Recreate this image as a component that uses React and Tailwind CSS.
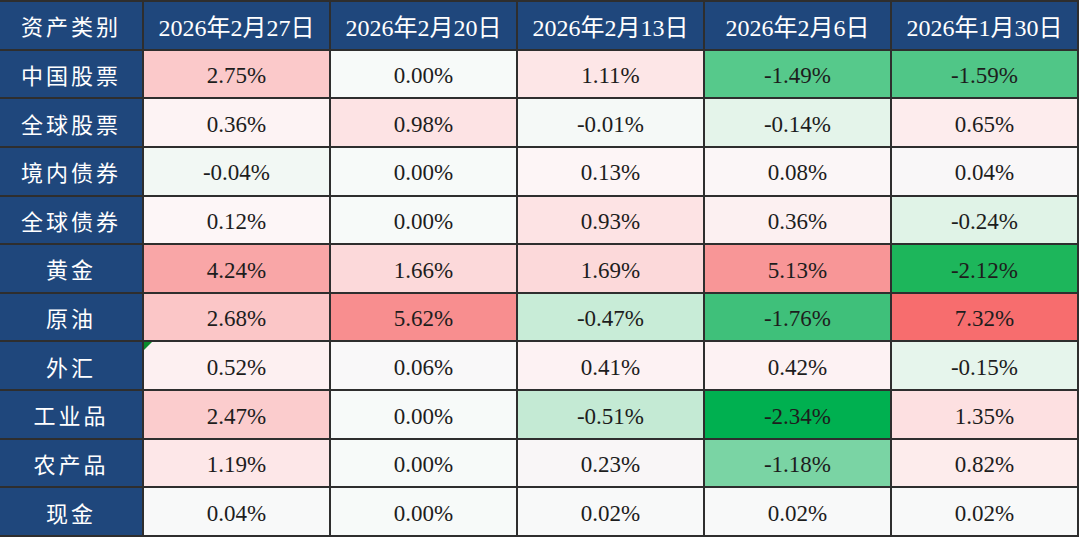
const headers = ['资产类别', '2026年2月27日', '2026年2月20日', '2026年2月13日', '2026年2月6日', '2026年1月30日'];

const rows = [
  ['中国股票', [['2.75%', '#fbc9ca'], ['0.00%', '#f7faf9'], ['1.11%', '#fde6e7'], ['-1.49%', '#56c98b'], ['-1.59%', '#50c687']]],
  ['全球股票', [['0.36%', '#fdf3f4'], ['0.98%', '#fde3e4'], ['-0.01%', '#f5f9f7'], ['-0.14%', '#e4f4ea'], ['0.65%', '#fdeced']]],
  ['境内债券', [['-0.04%', '#f2f8f4'], ['0.00%', '#f7faf9'], ['0.13%', '#fdf5f6'], ['0.08%', '#fbf6f7'], ['0.04%', '#f9f7f8']]],
  ['全球债券', [['0.12%', '#fdf6f7'], ['0.00%', '#f7faf9'], ['0.93%', '#fde3e4'], ['0.36%', '#fcf0f1'], ['-0.24%', '#e0f3e7']]],
  ['黄金', [['4.24%', '#f9a6a7'], ['1.66%', '#fcd9da'], ['1.69%', '#fcd9da'], ['5.13%', '#f89697'], ['-2.12%', '#1db65b']]],
  ['原油', [['2.68%', '#fbc6c7'], ['5.62%', '#f88e8f'], ['-0.47%', '#c8ecd7'], ['-1.76%', '#3fc07a'], ['7.32%', '#f76d6e']]],
  ['外汇', [['0.52%', '#fdf0f1'], ['0.06%', '#f9f8f9'], ['0.41%', '#fdf2f3'], ['0.42%', '#fdf2f3'], ['-0.15%', '#e6f5ec']]],
  ['工业品', [['2.47%', '#fbcccd'], ['0.00%', '#f7faf9'], ['-0.51%', '#c4ead4'], ['-2.34%', '#00b050'], ['1.35%', '#fde0e1']]],
  ['农产品', [['1.19%', '#fde7e8'], ['0.00%', '#f7faf9'], ['0.23%', '#f9f6f7'], ['-1.18%', '#7ad4a4'], ['0.82%', '#fdecec']]],
  ['现金', [['0.04%', '#f8f9f9'], ['0.00%', '#f7faf9'], ['0.02%', '#f8f9f9'], ['0.02%', '#f8f9f9'], ['0.02%', '#f8f9f9']]],
];

export default function App() {
  return (
    <div className="w-[1080px] h-[537px] bg-white overflow-hidden">
      <div className="grid grid-cols-[142px_repeat(5,185px)] grid-rows-[repeat(11,1fr)] gap-[2px] pt-[2px] pr-[2px] pb-[2px] bg-[#2e2e2e] w-[1079px] h-[537px] font-['Liberation_Serif','Noto_Sans_CJK_SC',serif]">
        {headers.map((h, i) => (
          <div
            key={h}
            className={`flex items-center justify-center pt-[5px] bg-[#1f477c] text-white ${i === 0 ? 'text-[22px] tracking-[3px]' : 'text-[24px]'}`}
          >
            {h}
          </div>
        ))}
        {rows.map(([label, cells], r) => (
          <>
            <div key={label} className="flex items-center justify-center pt-[5px] bg-[#1f477c] text-white text-[22px] tracking-[3px]">
              {label}
            </div>
            {cells.map(([v, c], j) => (
              <div
                key={label + j}
                className="relative flex items-center justify-center pt-[5px] text-[23px] text-[#1d1d1d]"
                style={{ backgroundColor: c }}
              >
                {r === 6 && j === 0 && (
                  <span className="absolute left-0 top-0 w-0 h-0 border-t-[8px] border-r-[8px] border-t-[#0b8a2c] border-r-transparent" />
                )}
                {v}
              </div>
            ))}
          </>
        ))}
      </div>
    </div>
  );
}
